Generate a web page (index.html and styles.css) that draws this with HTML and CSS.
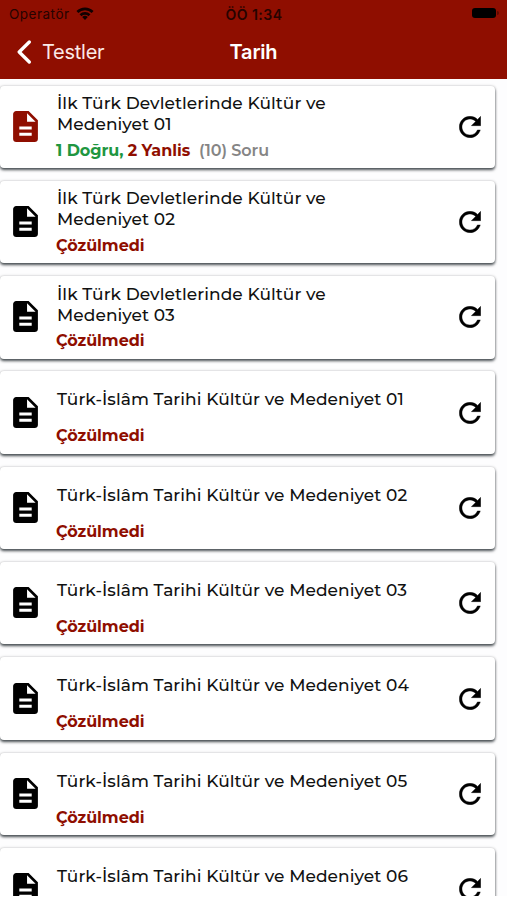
FILE: index.html
```html
<!DOCTYPE html>
<html lang="tr">
<head>
<meta charset="utf-8">
<title>Tarih</title>
<link rel="stylesheet" href="styles.css">
</head>
<body>
<svg class="sprite" aria-hidden="true">
  <symbol id="doc" viewBox="4 2 16 20"><path d="M14 2H6c-1.1 0-1.99.9-1.99 2L4 20c0 1.1.89 2 1.99 2H18c1.1 0 2-.9 2-2V8l-6-6zm2 16H8v-2h8v2zm0-4H8v-2h8v2zm-3-5V3.5L18.5 9H13z"/></symbol>
  <symbol id="refresh" viewBox="75 75 362 362"><path stroke="#000" stroke-width="6" d="M256 388c-72.597 0-132-59.405-132-132 0-72.601 59.403-132 132-132 36.3 0 69.299 15.4 92.406 39.601L278 234h154V80l-51.698 51.702C348.406 99.798 304.406 80 256 80c-96.797 0-176 79.203-176 176s78.094 176 176 176c81.045 0 148.287-54.134 169.401-128H378.85c-18.745 49.561-67.138 84-122.85 84z"/></symbol>
</svg>
<div class="screen">
  <header class="header">
    <div class="status">
      <div class="carrier"><span>Operatör</span>
        <svg class="wifi" viewBox="0 0 18 13"><path d="M9 13 6.2 10.1a4 4 0 0 1 5.6 0z"/><path d="M4.5 8.2a6.4 6.4 0 0 1 9 0M1.4 5a10.8 10.8 0 0 1 15.2 0" fill="none" stroke="currentColor" stroke-width="2.7"/></svg>
      </div>
      <span class="time">ÖÖ 1:34</span>
      <div class="power"><span class="battery"></span><span class="tip"></span></div>
    </div>
    <nav class="nav">
      <a class="back"><svg class="chevron" viewBox="0 0 14 24"><path d="M12.3 2 2.2 12l10.1 10"/></svg><span>Testler</span></a>
      <h1 class="heading">Tarih</h1>
    </nav>
  </header>
  <main class="list">
    <article class="card"><svg class="doc active"><use href="#doc"/></svg><div class="body"><h2 class="title">İlk Türk Devletlerinde Kültür ve<br>Medeniyet 01</h2><p class="state"><span class="right">1 Doğru,</span> <span>2 Yanlis</span><span class="count">(10) Soru</span></p></div><svg class="refresh"><use href="#refresh"/></svg></article>
    <article class="card"><svg class="doc"><use href="#doc"/></svg><div class="body"><h2 class="title">İlk Türk Devletlerinde Kültür ve<br>Medeniyet 02</h2><p class="state">Çözülmedi</p></div><svg class="refresh"><use href="#refresh"/></svg></article>
    <article class="card"><svg class="doc"><use href="#doc"/></svg><div class="body"><h2 class="title">İlk Türk Devletlerinde Kültür ve<br>Medeniyet 03</h2><p class="state">Çözülmedi</p></div><svg class="refresh"><use href="#refresh"/></svg></article>
    <article class="card"><svg class="doc"><use href="#doc"/></svg><div class="body"><h2 class="title">Türk-İslâm Tarihi Kültür ve Medeniyet 01</h2><p class="state">Çözülmedi</p></div><svg class="refresh"><use href="#refresh"/></svg></article>
    <article class="card"><svg class="doc"><use href="#doc"/></svg><div class="body"><h2 class="title">Türk-İslâm Tarihi Kültür ve Medeniyet 02</h2><p class="state">Çözülmedi</p></div><svg class="refresh"><use href="#refresh"/></svg></article>
    <article class="card"><svg class="doc"><use href="#doc"/></svg><div class="body"><h2 class="title">Türk-İslâm Tarihi Kültür ve Medeniyet 03</h2><p class="state">Çözülmedi</p></div><svg class="refresh"><use href="#refresh"/></svg></article>
    <article class="card"><svg class="doc"><use href="#doc"/></svg><div class="body"><h2 class="title">Türk-İslâm Tarihi Kültür ve Medeniyet 04</h2><p class="state">Çözülmedi</p></div><svg class="refresh"><use href="#refresh"/></svg></article>
    <article class="card"><svg class="doc"><use href="#doc"/></svg><div class="body"><h2 class="title">Türk-İslâm Tarihi Kültür ve Medeniyet 05</h2><p class="state">Çözülmedi</p></div><svg class="refresh"><use href="#refresh"/></svg></article>
    <article class="card"><svg class="doc"><use href="#doc"/></svg><div class="body"><h2 class="title">Türk-İslâm Tarihi Kültür ve Medeniyet 06</h2></div><svg class="refresh"><use href="#refresh"/></svg></article>
  </main>
</div>
</body>
</html>
```
FILE: styles.css
```css
* { box-sizing: border-box; }
body { margin: 0; height: 900px; overflow: hidden; background: #fff; font-family: Montserrat, Inter, sans-serif; }
h1, h2, p { margin: 0; }
.sprite { display: none; }
.screen { height: 896px; overflow: hidden; background: #fdfdfe; }
.header { height: 79px; background: #8f0e00; font-family: Inter, sans-serif; }
.status { height: 28px; padding: 0 8px 0 9px; display: grid; grid-template-columns: 1fr auto 1fr; align-items: center; color: #260300; font-size: 13.5px; }
.carrier { display: flex; align-items: center; gap: 6px; letter-spacing: 0.5px; }
.wifi { width: 18px; height: 13px; fill: currentColor; margin-top: -2px; color: #100100; }
.time { font-weight: 600; font-size: 14px; letter-spacing: 0.45px; }
.power { display: flex; align-items: center; justify-content: flex-end; gap: 1px; margin-top: -2px; }
.battery { width: 24px; height: 10px; border-radius: 3px; background: #000; }
.tip { width: 2px; height: 4px; border-radius: 0 2px 2px 0; background: #5e0900; }
.nav { height: 48px; padding: 0 17px; display: grid; grid-template-columns: 1fr auto 1fr; align-items: center; color: #fff; }
.back { display: flex; align-items: center; gap: 11px; font-size: 20px; letter-spacing: -0.25px; color: #fbe9e7; }
.chevron { width: 14px; height: 24px; fill: none; stroke: #fff; stroke-width: 3.3; stroke-linecap: round; stroke-linejoin: round; }
.heading { font-size: 20px; font-weight: 600; letter-spacing: -0.2px; }
.list { padding: 6.5px 12px 0 0; display: flex; flex-direction: column; gap: 12.8px; }
.card { height: 82.5px; flex: none; padding: 0 14px 0 13px; display: flex; align-items: center; background: #fff; border-radius: 4px; box-shadow: 0 2px 3px rgba(0,10,15,.7), 0 0 3px rgba(0,10,15,.22); }
.doc { width: 25px; height: 31px; flex: none; margin-top: -1px; }
.doc.active { fill: #8f0e00; }
.refresh { width: 22px; height: 22px; flex: none; }
.body { flex: 1; height: 100%; padding: 7px 0 0 18px; }
.title { height: 43px; padding-left: 1px; display: flex; align-items: center; font-size: 17px; line-height: 21px; font-weight: 500; color: #111; white-space: nowrap; letter-spacing: 0.06px; }
.state { height: 21px; line-height: 21px; margin-top: 4px; font-size: 16px; font-weight: 700; letter-spacing: -0.06px; color: #8f0e00; white-space: nowrap; }
.right { color: #209640; }
.count { color: #858585; margin-left: 9px; font-weight: 600; }
```
